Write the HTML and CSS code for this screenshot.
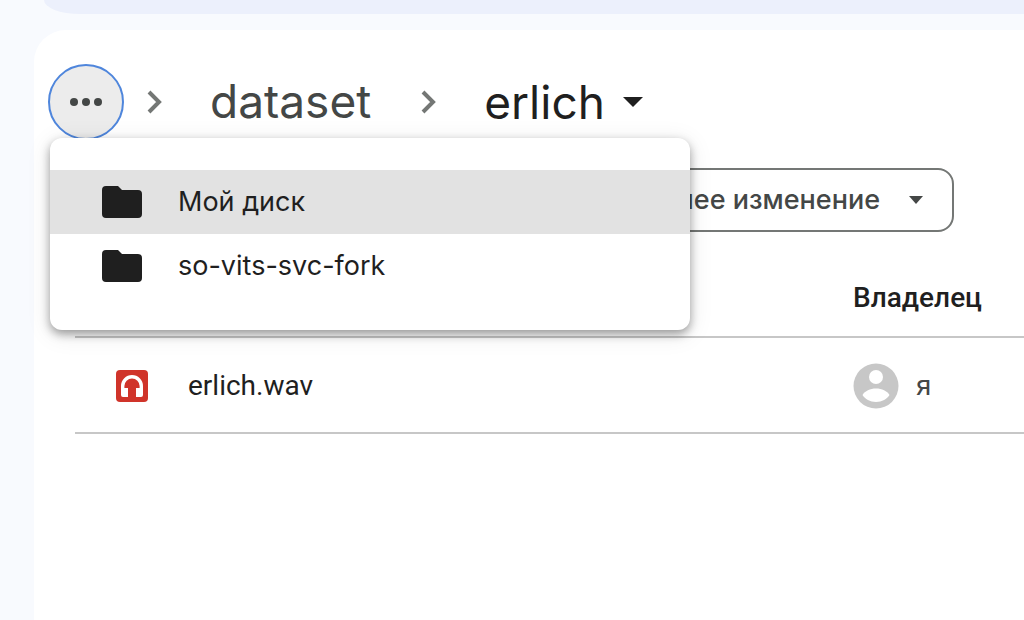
FILE: index.html
```html
<!DOCTYPE html>
<html lang="ru">
<head>
<meta charset="utf-8">
<meta name="viewport" content="width=device-width, initial-scale=1">
<title>erlich</title>
<link rel="stylesheet" href="styles.css">
</head>
<body>
<div class="search-bar"></div>
<main class="panel">
  <nav class="crumbs">
    <button class="more" type="button" aria-label="Показать путь" aria-expanded="true">
      <svg class="more-icon" viewBox="0 0 32 8" aria-hidden="true"><circle cx="4" cy="4" r="4"/><circle cx="16" cy="4" r="4"/><circle cx="28" cy="4" r="4"/></svg>
    </button>
    <svg class="chevron" viewBox="0 0 16 24" aria-hidden="true"><path d="M2 2l10 10L2 22"/></svg>
    <a class="crumb" href="#">dataset</a>
    <svg class="chevron" viewBox="0 0 16 24" aria-hidden="true"><path d="M2 2l10 10L2 22"/></svg>
    <button class="crumb current" type="button">erlich
      <svg class="crumb-arrow" viewBox="0 0 20 10" aria-hidden="true"><path d="M0 0h20L10 10z"/></svg>
    </button>
    <div class="menu" role="menu">
      <button class="menu-item active" type="button" role="menuitem">
        <svg class="folder" viewBox="0 0 40 32" aria-hidden="true"><path d="M4 0h12l4 4h16a4 4 0 0 1 4 4v20a4 4 0 0 1-4 4H4a4 4 0 0 1-4-4V4a4 4 0 0 1 4-4z"/></svg>
        Мой диск
      </button>
      <button class="menu-item" type="button" role="menuitem">
        <svg class="folder" viewBox="0 0 40 32" aria-hidden="true"><path d="M4 0h12l4 4h16a4 4 0 0 1 4 4v20a4 4 0 0 1-4 4H4a4 4 0 0 1-4-4V4a4 4 0 0 1 4-4z"/></svg>
        so-vits-svc-fork
      </button>
    </div>
  </nav>
  <div class="filters">
    <button class="chip" type="button">Последнее изменение
      <svg class="chip-arrow" viewBox="0 0 14 8" aria-hidden="true"><path d="M0 0h14L7 8z"/></svg>
    </button>
  </div>
  <table class="files">
    <thead>
      <tr><th class="name" scope="col" aria-label="Название"></th><th class="owner" scope="col">Владелец</th></tr>
    </thead>
    <tbody>
      <tr>
        <td class="name">
          <div class="cell">
            <svg class="audio" viewBox="0 0 32 32" aria-hidden="true"><rect class="audio-bg" width="32" height="32" rx="4"/><path class="audio-band" d="M6.7 24v-8a9.3 9.3 0 0 1 18.6 0v8"/><path class="audio-cup" d="M5 18h7v9H7a2 2 0 0 1-2-2zM20 18h7v7a2 2 0 0 1-2 2h-5z"/></svg>
            erlich.wav
          </div>
        </td>
        <td class="owner">
          <div class="cell person">
            <svg class="avatar" viewBox="0 0 46 46" aria-hidden="true"><circle class="avatar-bg" cx="23" cy="23" r="22.5"/><circle class="avatar-fg" cx="23" cy="14" r="7"/><path class="avatar-fg" d="M9.500 32C12 28 17 25.500 23 25.500S34 28 36.500 32C34 36 29 39 23 39S12 36 9.500 32z"/></svg>
            я
          </div>
        </td>
      </tr>
    </tbody>
  </table>
</main>
</body>
</html>
```
FILE: styles.css
```css
* { box-sizing: border-box; }
body {
  display: flex;
  flex-direction: column;
  min-height: 100vh;
  margin: 0;
  padding-left: 34px;
  background: #f8fafe;
  color: #1f1f1f;
  font-family: Roboto, "Noto Sans", sans-serif;
  font-size: 28px;
  line-height: 40px;
  overflow-x: hidden;
}
button { margin: 0; border: 0; background: none; color: inherit; font: inherit; }
svg { display: block; flex: none; fill: currentColor; }
.search-bar {
  height: 14px;
  margin-left: 10px;
  background: #ecf0fc;
  border-bottom-left-radius: 36px 14px;
}
.panel {
  flex: 1;
  margin-top: 16px;
  padding-top: 34px;
  background: #fff;
  border-top-left-radius: 32px;
}
.crumbs {
  position: relative;
  display: flex;
  align-items: center;
  height: 76px;
  padding-left: 14px;
  color: #444746;
  font-family: Inter, "Noto Sans", sans-serif;
  font-size: 46px;
  line-height: 64px;
}
.more {
  display: flex;
  align-items: center;
  justify-content: center;
  width: 76px;
  height: 76px;
  padding: 0;
  border: 2px solid #4f86dc;
  border-radius: 50%;
  background: #ececec;
}
.more-icon { width: 32px; height: 8px; }
.chevron {
  width: 16px;
  height: 24px;
  margin-left: 23px;
  fill: none;
  stroke: #747775;
  stroke-width: 4;
}
.crumb { margin-left: 47px; padding-bottom: 2px; color: #444746; text-decoration: none; }
.crumb + .chevron { margin-left: 50px; }
.current { display: flex; align-items: center; gap: 18px; padding: 0; color: #1f1f1f; }
.crumb-arrow { width: 20px; height: 10px; }
.menu {
  position: absolute;
  z-index: 1;
  top: 74px;
  left: 16px;
  width: 640px;
  padding: 32px 0;
  border-radius: 12px;
  background: #fff;
  box-shadow: 0 4px 10px rgba(0, 0, 0, .36), 0 4px 24px rgba(0, 0, 0, .1);
  color: #1f1f1f;
  font-size: 27px;
  line-height: 40px;
}
.menu-item {
  display: flex;
  align-items: center;
  gap: 36px;
  width: 100%;
  height: 64px;
  padding: 0 52px;
  text-align: left;
}
.active { background: #e2e2e2; }
.folder { width: 40px; height: 32px; }
.filters { display: flex; justify-content: flex-end; padding: 28px 70px 0 0; }
.chip {
  display: flex;
  align-items: center;
  gap: 29px;
  height: 64px;
  padding: 0 29px;
  border: 2px solid #747775;
  border-radius: 16px;
  color: #444746;
  font-family: Inter, "Noto Sans", sans-serif;
  font-size: 27px;
  font-weight: 500;
  white-space: nowrap;
}
.chip-arrow { width: 14px; height: 8px; }
.files {
  width: calc(100% - 41px);
  margin-left: 41px;
  border-collapse: collapse;
  table-layout: fixed;
}
.files th, .files td { padding: 0; border-bottom: 2px solid #c7c7c7; text-align: left; }
.files th { height: 105px; padding-top: 28px; font-weight: 500; }
.files td { height: 96px; padding-top: 2px; }
.files .owner { width: 171px; }
.cell { display: flex; align-items: center; gap: 40px; padding-left: 41px; }
.person { gap: 17px; padding-left: 0; color: #444746; }
.audio { width: 32px; height: 32px; }
.audio-bg { fill: #d0342a; }
.audio-band { fill: none; stroke: #fff; stroke-width: 3.4; }
.audio-cup { fill: #fff; }
.avatar { width: 46px; height: 46px; }
.avatar-bg { fill: #c7c7c7; }
.avatar-fg { fill: #fff; }
```
